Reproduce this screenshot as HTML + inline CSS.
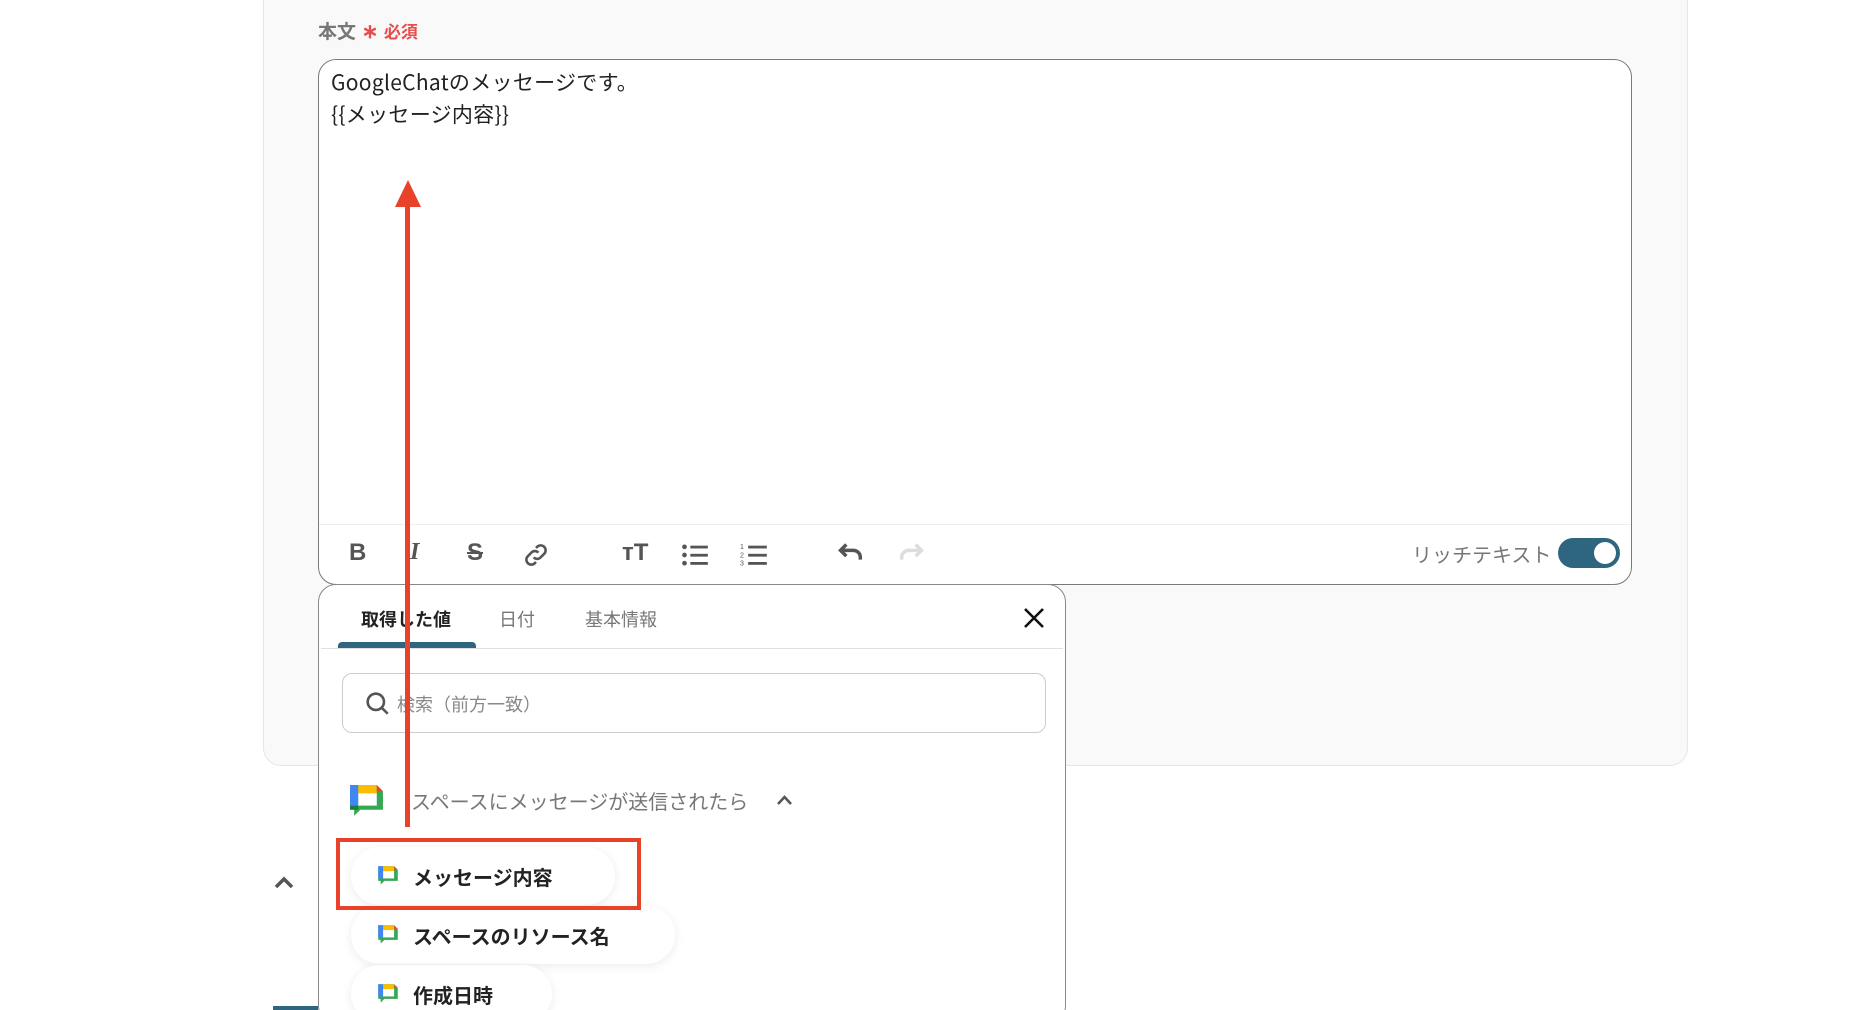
<!DOCTYPE html>
<html style="overflow:hidden;height:1010px"><head><meta charset="utf-8"><style>
*{box-sizing:border-box;margin:0;padding:0}
body{width:1876px;height:1010px;overflow:hidden;background:#fff;font-family:"Liberation Sans","Noto Sans CJK JP",sans-serif;}
#w{position:relative;width:1876px;height:1010px;overflow:hidden}
.card{position:absolute;left:263px;top:-20px;width:1425px;height:786px;background:#f9f9f9;border:1px solid #e6e6e6;border-radius:18px}
.abs{position:absolute}
.ta{position:absolute;left:318px;top:59px;width:1314px;height:526px;background:#fff;border:1.5px solid #7a7a7a;border-radius:18px}
.tb{position:absolute;left:0;right:0;top:464px;border-top:1px solid #eee}
.ic{position:absolute;top:541px;width:28px;height:28px}
.pop{position:absolute;left:318px;top:584px;width:748px;height:440px;background:#fff;border:1.5px solid #888;border-radius:18px}
.chip{position:absolute;left:351px;height:58px;background:#fff;border-radius:29px;box-shadow:0 2px 10px rgba(0,0,0,.08);font-size:20px;font-weight:bold;color:#222;display:flex;align-items:center;padding-left:26px}
.chip svg{margin-right:14px}
</style></head><body><div id="w">
<div class="card"></div>
<div class="abs" style="left:318px;top:17px;font-size:19px;font-weight:bold;color:#777">本文<span style="color:#e84d4d;font-size:20px"> ∗ </span><span style="color:#e84d4d;font-size:17px">必須</span></div>
<div class="ta">
<div style="position:absolute;left:12px;top:6px;font-size:21px;line-height:32px;color:#222;font-family:'Noto Sans CJK JP',sans-serif;letter-spacing:0.3px">GoogleChatのメッセージです。<br>{{メッセージ内容}}</div>
<div class="tb"></div>
</div>
<div class="abs" style="left:349px;top:539px;font-size:24px;font-weight:bold;color:#555">B</div>
<div class="abs" style="left:410px;top:539px;font-size:24px;font-weight:bold;font-style:italic;color:#555;font-family:'Liberation Serif',serif">I</div>
<div class="abs" style="left:467px;top:539px;font-size:24px;font-weight:bold;color:#555;text-decoration:line-through">S</div>
<svg class="ic" style="left:522px" viewBox="0 0 24 24" fill="none" stroke="#555" stroke-width="2.2"><path d="M10 14a4 4 0 0 0 6 0l3-3a4 4 0 0 0-6-6l-1 1"/><path d="M14 10a4 4 0 0 0-6 0l-3 3a4 4 0 0 0 6 6l1-1"/></svg>
<div class="abs" style="left:622px;top:539px;font-size:24px;font-weight:bold;color:#555">ᴛT</div>
<svg class="ic" style="left:681px" viewBox="0 0 24 24" fill="#555"><circle cx="3" cy="5" r="2"/><circle cx="3" cy="12" r="2"/><circle cx="3" cy="19" r="2"/><rect x="8" y="4" width="15" height="2.4"/><rect x="8" y="11" width="15" height="2.4"/><rect x="8" y="18" width="15" height="2.4"/></svg>
<svg class="ic" style="left:740px" viewBox="0 0 24 24" fill="#555"><text x="0" y="7" font-size="6">1</text><text x="0" y="14" font-size="6">2</text><text x="0" y="21" font-size="6">3</text><rect x="7" y="4" width="16" height="2.4"/><rect x="7" y="11" width="16" height="2.4"/><rect x="7" y="18" width="16" height="2.4"/></svg>
<svg class="ic" style="left:837px" viewBox="0 0 24 24" fill="none" stroke="#555" stroke-width="3"><path d="M4 8h10a6 6 0 0 1 6 6v2"/><path d="M8 3L3 8l5 5" /></svg>
<svg class="ic" style="left:897px" viewBox="0 0 24 24" fill="none" stroke="#ddd" stroke-width="3"><path d="M20 8H10a6 6 0 0 0-6 6v2"/><path d="M16 3l5 5-5 5"/></svg>
<div class="abs" style="left:1412px;top:539px;font-size:20px;color:#777">リッチテキスト</div>
<div class="abs" style="left:1558px;top:538px;width:62px;height:30px;border-radius:15px;background:#2e6680"><div style="position:absolute;right:4px;top:4px;width:22px;height:22px;border-radius:50%;background:#fff"></div></div>
<svg class="abs" style="left:273px;top:874px" width="22" height="16" viewBox="0 0 22 16" fill="none" stroke="#555" stroke-width="3.5"><path d="M3 13l8-8 8 8"/></svg>
<div class="abs" style="left:273px;top:1006px;width:45px;height:4px;background:#2e6680"></div>
<div class="pop">
<div style="position:absolute;left:42px;top:21px;font-size:18px;font-weight:bold;color:#222">取得した値</div>
<div style="position:absolute;left:180px;top:21px;font-size:18px;color:#777">日付</div>
<div style="position:absolute;left:266px;top:21px;font-size:18px;color:#777">基本情報</div>
<div style="position:absolute;left:19px;top:57px;width:138px;height:6px;background:#2e6680;border-radius:4px 4px 0 0"></div>
<div style="position:absolute;left:2px;right:2px;top:63px;border-top:1px solid #e0e0e0"></div>
<svg style="position:absolute;left:703px;top:21px" width="24" height="24" viewBox="0 0 24 24" stroke="#111" stroke-width="2.6"><path d="M3 3l18 18M21 3L3 21"/></svg>
<div style="position:absolute;left:23px;top:88px;width:704px;height:60px;border:1px solid #ccc;border-radius:10px">
<svg style="position:absolute;left:22px;top:17px" width="26" height="26" viewBox="0 0 24 24" fill="none" stroke="#555" stroke-width="2.4"><circle cx="10" cy="10" r="7.5"/><path d="M15.5 15.5L21 21"/></svg>
<div style="position:absolute;left:54px;top:17px;font-size:18px;color:#888">検索（前方一致）</div>
</div>
<svg style="position:absolute;left:29px;top:198px" width="37" height="37" viewBox="0 0 36 36"><path d="M2 2h26l6 6v18H12l-6 6v-6H2z" fill="#34a853"/><path d="M2 2h8v20H2z" fill="#4285f4"/><path d="M10 2h18v8H10z" fill="#fbbc04"/><path d="M28 2l6 6h-6z" fill="#ea4335"/><path d="M10 10h18v12H10z" fill="#fff"/><path d="M2 22h8v4H2z" fill="#188038"/></svg>
<div style="position:absolute;left:92px;top:201px;font-size:20px;color:#777">スペースにメッセージが送信されたら</div>
<svg style="position:absolute;left:457px;top:209px" width="17" height="12" viewBox="0 0 17 12" fill="none" stroke="#555" stroke-width="2.6"><path d="M2 10l6.5-7 6.5 7"/></svg>
</div>
<div class="chip" style="top:847px;width:264px"><svg width="22" height="22" viewBox="0 0 36 36"><path d="M2 2h26l6 6v18H12l-6 6v-6H2z" fill="#34a853"/><path d="M2 2h8v20H2z" fill="#4285f4"/><path d="M10 2h18v8H10z" fill="#fbbc04"/><path d="M28 2l6 6h-6z" fill="#ea4335"/><path d="M10 10h18v12H10z" fill="#fff"/></svg>メッセージ内容</div>
<div class="chip" style="top:906px;width:324px"><svg width="22" height="22" viewBox="0 0 36 36"><path d="M2 2h26l6 6v18H12l-6 6v-6H2z" fill="#34a853"/><path d="M2 2h8v20H2z" fill="#4285f4"/><path d="M10 2h18v8H10z" fill="#fbbc04"/><path d="M28 2l6 6h-6z" fill="#ea4335"/><path d="M10 10h18v12H10z" fill="#fff"/></svg>スペースのリソース名</div>
<div class="chip" style="top:965px;width:201px"><svg width="22" height="22" viewBox="0 0 36 36"><path d="M2 2h26l6 6v18H12l-6 6v-6H2z" fill="#34a853"/><path d="M2 2h8v20H2z" fill="#4285f4"/><path d="M10 2h18v8H10z" fill="#fbbc04"/><path d="M28 2l6 6h-6z" fill="#ea4335"/><path d="M10 10h18v12H10z" fill="#fff"/></svg>作成日時</div>
<div class="abs" style="left:336px;top:838px;width:305px;height:72px;border:4px solid #e8432a"></div>
<div class="abs" style="left:405px;top:200px;width:5px;height:627px;background:#e8432a"></div>
<svg class="abs" style="left:395px;top:180px" width="26" height="27" viewBox="0 0 26 27"><path d="M13 0L26 27H0z" fill="#e8432a"/></svg>
</div></body></html>
